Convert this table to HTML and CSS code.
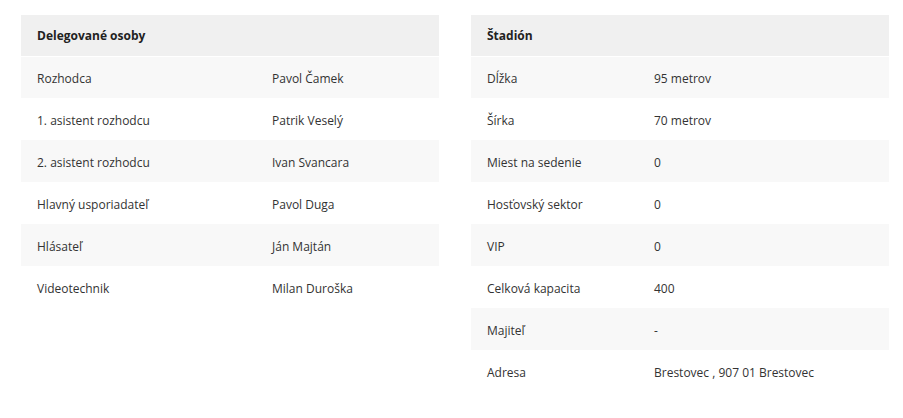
FILE: index.html
```html
<!DOCTYPE html>
<html lang="sk">
<head>
<meta charset="utf-8">
<link rel="stylesheet" href="styles.css">
</head>
<body>
<div class="wrap">
  <table class="info info-left">
    <colgroup><col class="c-key"><col></colgroup>
    <thead><tr><th colspan="2">Delegované osoby</th></tr></thead>
    <tbody>
      <tr><td>Rozhodca</td><td>Pavol Čamek</td></tr>
      <tr><td>1. asistent rozhodcu</td><td>Patrik Veselý</td></tr>
      <tr><td>2. asistent rozhodcu</td><td>Ivan Svancara</td></tr>
      <tr><td>Hlavný usporiadateľ</td><td>Pavol Duga</td></tr>
      <tr><td>Hlásateľ</td><td>Ján Majtán</td></tr>
      <tr><td>Videotechnik</td><td>Milan Duroška</td></tr>
    </tbody>
  </table>
  <table class="info info-right">
    <colgroup><col class="c-key"><col></colgroup>
    <thead><tr><th colspan="2">Štadión</th></tr></thead>
    <tbody>
      <tr><td>Dĺžka</td><td>95 metrov</td></tr>
      <tr><td>Šírka</td><td>70 metrov</td></tr>
      <tr><td>Miest na sedenie</td><td>0</td></tr>
      <tr><td>Hosťovský sektor</td><td>0</td></tr>
      <tr><td>VIP</td><td>0</td></tr>
      <tr><td>Celková kapacita</td><td>400</td></tr>
      <tr><td>Majiteľ</td><td>-</td></tr>
      <tr><td>Adresa</td><td>Brestovec , 907 01 Brestovec</td></tr>
    </tbody>
  </table>
</div>
</body>
</html>
```
FILE: styles.css
```css
html, body {
  margin: 0;
  padding: 0;
  background: #fff;
}
body {
  font-family: "Open Sans", "Liberation Sans", sans-serif;
  font-size: 12px;
  color: #333;
}
.wrap {
  display: grid;
  grid-template-columns: 418px 418px;
  column-gap: 32px;
  align-items: start;
  padding: 15px 0 0 21px;
}
.info {
  width: 418px;
  border-collapse: collapse;
  table-layout: fixed;
}
.info-left .c-key { width: 235px; }
.info-right .c-key { width: 167px; }
.info th {
  background: #f0f0f0;
  height: 41px;
  padding: 0 16px;
  text-align: left;
  font-weight: 700;
  color: #222;
  font-size: 12px;
  border-bottom: 1px solid #fff;
  box-sizing: border-box;
}
.info td {
  height: 42px;
  padding: 3px 16px 0;
  vertical-align: middle;
  white-space: nowrap;
  box-sizing: border-box;
}
.info tbody tr:nth-child(odd) td {
  background: #f8f8f8;
}
```
